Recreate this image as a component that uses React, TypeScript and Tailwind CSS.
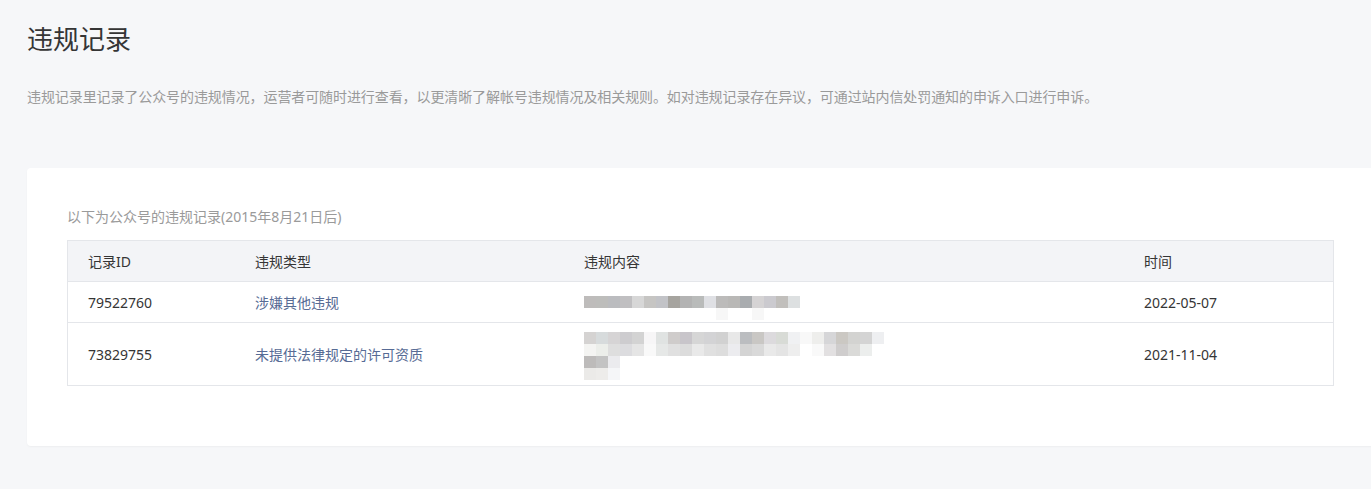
const FONT = "font-['Noto_Sans','Noto_Sans_CJK_SC',sans-serif]";

interface Violation {
  id: string;
  type: string;
  time: string;
  blur: string[][];
  height: string;
}

// 打码的违规内容（马赛克色块）
const records: Violation[] = [
  {
    id: "79522760",
    type: "涉嫌其他违规",
    time: "2022-05-07",
    height: "h-[41px]",
    blur: [
      ["#bebcbb", "#bdbdbb", "#bbbcbf", "#c0bfc1", "#d7d7d7", "#c6c5c3", "#c2c3c7", "#a6a49f", "#b3b3b3", "#b9bbba", "#dfe0e4", "#bcbbba", "#b9b8b6", "#a9acaf", "#d5d3d4", "#cbcacf", "#c1bfbc", "#dde0e1"],
      ["#fff", "#fff", "#fff", "#fff", "#fff", "#fff", "#fff", "#fff", "#fff", "#fff", "#fff", "#f7f7f7", "#fff", "#fff", "#f7f7f7"],
    ],
  },
  {
    id: "73829755",
    type: "未提供法律规定的许可资质",
    time: "2021-11-04",
    height: "h-[63px]",
    blur: [
      ["#d5d3d2", "#d7dbdc", "#d6d4d5", "#cdcccf", "#d3d3d3", "#f7f6f7", "#e0e3e2", "#cfcccb", "#c8c5ca", "#d6d6d6", "#d3d3d5", "#d1d1d1", "#e8e8e8", "#bbbdc0", "#c9c7c4", "#dcdadd", "#d8dbd6", "#f0f1f3", "#f8f8f8", "#eeeeec", "#d6d6d8", "#cbc8c3", "#d3d3d1", "#d4d4d4", "#eeeff1"],
      ["#f4f4f2", "#eceeea", "#dedede", "#dcdcdf", "#e5e5e5", "#f9f9f9", "#e6e8e7", "#e0e0e0", "#dcdcdc", "#e9e9e9", "#e0e0e0", "#dddddd", "#ececef", "#d4d4d4", "#d9d9d9", "#e9e9e9", "#e4e4e4", "#eeeeee", "#ffffff", "#f9f9f9", "#e2e0e1", "#cfcdcd", "#dadad8", "#eceeed"],
      ["#bdbbba", "#c3c3c3", "#ebebee"],
      ["#ebeae8", "#edecea", "#f5f6f8"],
    ],
  },
];

const cols = "grid grid-cols-[167px_329px_560px_1fr]";

const Mosaic = ({ lines }: { lines: string[][] }) => (
  <div className="flex flex-col">
    {lines.map((line, i) => (
      <div key={i} className="flex">
        {line.map((c, j) => (
          <span key={j} className="block w-[12px] h-[12px]" style={{ backgroundColor: c }} />
        ))}
      </div>
    ))}
  </div>
);

export default function App() {
  return (
    <div className={`min-h-screen w-full overflow-hidden bg-[#f6f7f9] ${FONT}`}>
      <div className="pl-[27px] pt-[21px] pb-[40px]">
        <h1 className="text-[26px] leading-[36px] font-normal text-[#353535]">违规记录</h1>
        <p className="mt-[30px] text-[14px] leading-[20px] tracking-[-0.09px] text-[#9a9a9a]">
          违规记录里记录了公众号的违规情况，运营者可随时进行查看，以更清晰了解帐号违规情况及相关规则。如对违规记录存在异议，可通过站内信处罚通知的申诉入口进行申诉。
        </p>

        <div className="mt-[61px] w-[1347px] bg-white rounded-[4px] shadow-[0_1px_2px_rgba(0,0,0,0.04)] pl-[40px] pt-[39px] pb-[60px]">
          <p className="text-[14px] leading-[20px] text-[#9a9a9a]">以下为公众号的违规记录(2015年8月21日后)</p>

          <div className="mt-[13px] w-[1267px] border border-[#e4e6ea] text-[14px] text-[#353535]">
            <div className={`${cols} h-[40px] items-center bg-[#f3f4f7]`}>
              <div className="pl-[20px]">记录ID</div>
              <div className="pl-[20px]">违规类型</div>
              <div className="pl-[20px]">违规内容</div>
              <div className="pl-[20px]">时间</div>
            </div>
            {records.map((r, i) => (
              <div key={r.id} className={`${cols} ${r.height} items-center border-t border-[#e4e6ea]`}>
                <div className="pl-[20px]">{r.id}</div>
                <div className="pl-[20px] text-[#576b95]">{r.type}</div>
                <div className={`pl-[20px] self-start ${i === 0 ? "pt-[14px]" : "pt-[9px]"}`}>
                  <Mosaic lines={r.blur} />
                </div>
                <div className="pl-[20px]">{r.time}</div>
              </div>
            ))}
          </div>
        </div>
      </div>
    </div>
  );
}
